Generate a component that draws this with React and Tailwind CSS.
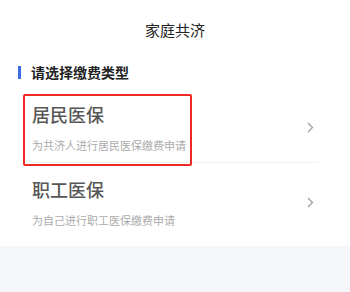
const items = [
  { title: "居民医保", desc: "为共济人进行居民医保缴费申请", marked: true },
  { title: "职工医保", desc: "为自己进行职工医保缴费申请", marked: false },
];

const Chevron = () => (
  <svg width="7" height="11" viewBox="0 0 7 11" className="mr-[4px] shrink-0">
    <path d="M1 1l4.5 4.5L1 10" fill="none" stroke="#9a9a9a" strokeWidth="1.2" />
  </svg>
);

const App = () => {
  return (
    <div
      className="h-[292px] w-[350px] bg-[#f5f6fa]"
      style={{ fontFamily: '"Noto Sans CJK SC", "Noto Sans", sans-serif' }}
    >
      <div className="bg-white pb-[9px]">
        <div className="pt-[19px] text-center text-[15px] leading-[22px] text-[#222]">
          家庭共济
        </div>
        <div className="mt-[21px] flex items-center pl-[18px]">
          <span className="h-[13px] w-[3px] bg-[#3d6ce0]" />
          <h2 className="ml-[10px] text-[14px] font-bold leading-[20px] text-[#222]">
            请选择缴费类型
          </h2>
        </div>
        <div className="mx-[32px] mt-[6px]">
          {items.map((item, i) => (
            <div
              key={i}
              className={
                "relative flex items-center justify-between pt-[14px] pb-[9px] " +
                (i < items.length - 1 ? "border-b border-[#f0f0f0]" : "")
              }
            >
              <div>
                <h3 className="text-[18px] font-medium leading-[24px] text-[#575757]">
                  {item.title}
                </h3>
                <p className="mt-[11px] text-[11px] leading-[16px] text-[#ababab]">
                  {item.desc}
                </p>
              </div>
              <Chevron />
              {item.marked && (
                <div className="absolute left-[-9px] top-[6px] h-[72px] w-[169px] rounded-[2px] border-2 border-[#ee2a24]" />
              )}
            </div>
          ))}
        </div>
      </div>
    </div>
  );
};

export default App;
